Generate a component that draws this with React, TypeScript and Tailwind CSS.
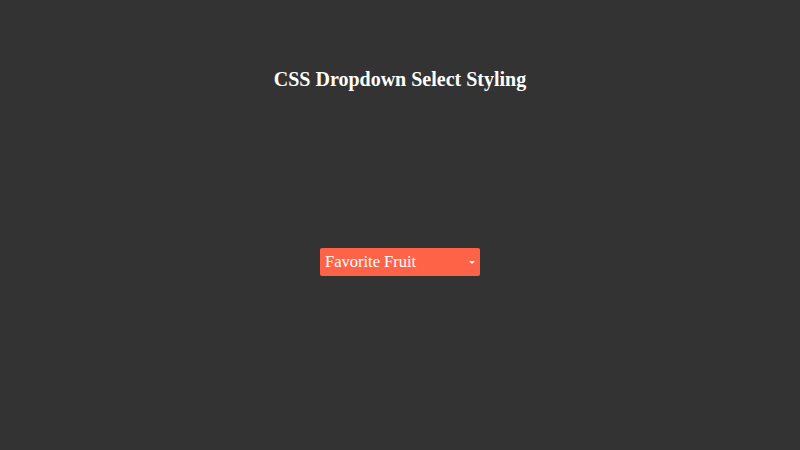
export default function App() {
  return (
    <main
      className="flex h-[450px] w-full flex-col items-center bg-[#333333] text-white"
      style={{ fontFamily: '"Liberation Serif", serif' }}
    >
      <h1 className="mt-[67px] text-[20px] font-bold leading-[24px]">CSS Dropdown Select Styling</h1>
      <div className="mt-[157px] flex h-[28px] w-[160px] items-center justify-between rounded-[2px] bg-[#ff6347] pl-[5px] pr-[4px]">
        <span className="text-[16.5px] leading-none">Favorite Fruit</span>
        <svg width="6" height="3" viewBox="0 0 6 3" className="mr-[1px]">
          <polygon points="0,0 6,0 3,3" fill="#ffffff" />
        </svg>
      </div>
    </main>
  );
}
